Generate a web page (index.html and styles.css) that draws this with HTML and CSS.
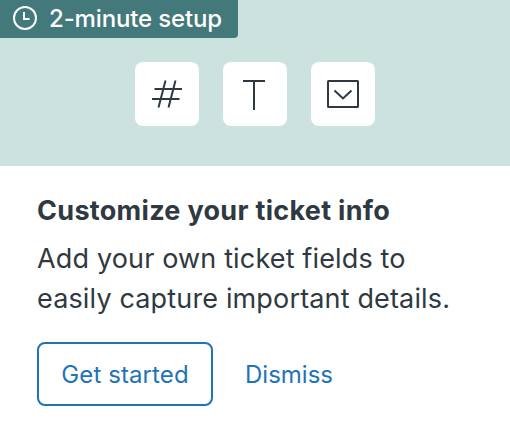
FILE: index.html
```html
<!DOCTYPE html>
<html lang="en">

<head>
    <meta charset="UTF-8">
    <meta name="viewport" content="width=device-width, initial-scale=1.0">
    <title>Customize your ticket info</title>
    <link rel="stylesheet" href="styles.css">
</head>

<body>

    <div class="card">
        <!-- Banner with setup time and field type tiles -->
        <div class="banner">
            <div class="badge">
                <svg class="clock" width="24" height="24" viewBox="0 0 24 24" fill="none" stroke="currentColor" stroke-width="2">
                    <circle cx="12" cy="12" r="11" />
                    <path d="M11 6v7h5.5" />
                </svg>
                <span class="badge-text">2-minute setup</span>
            </div>

            <div class="tiles">
                <div class="tile">
                    <svg width="64" height="64" viewBox="0 0 64 64" fill="none" stroke="currentColor" stroke-width="2">
                        <path d="M30.5 18.5L23.5 45.5M40.5 18.5L33.5 45.5M19.5 27h27.5M17 37h27.5" />
                    </svg>
                </div>
                <div class="tile">
                    <svg width="64" height="64" viewBox="0 0 64 64" fill="none" stroke="currentColor" stroke-width="2">
                        <path d="M20 19h22M31 19v29" />
                    </svg>
                </div>
                <div class="tile">
                    <svg width="64" height="64" viewBox="0 0 64 64" fill="none" stroke="currentColor" stroke-width="2">
                        <rect x="17" y="19" width="30" height="26" rx="0.5" />
                        <path d="M23.5 28.5L32 36.5L40.5 28.5" />
                    </svg>
                </div>
            </div>
        </div>

        <!-- Text and actions -->
        <div class="content">
            <h1 class="title">Customize your ticket info</h1>
            <p class="description">Add your own ticket fields to<br>easily capture important details.</p>
            <div class="actions">
                <button class="btn btn-outline"><span>Get started</span></button>
                <button class="btn btn-link"><span>Dismiss</span></button>
            </div>
        </div>
    </div>

</body>

</html>
```
FILE: styles.css
```css
/* General body styles */
body {
    font-family: Inter, "Liberation Sans", sans-serif;
    margin: 0;
    background-color: #fff;
    color: #2f3941;
}

/* Banner styles */
.banner {
    height: 166px;
    background-color: #cce2df;
}

.badge {
    display: flex;
    align-items: center;
    box-sizing: border-box;
    width: 238px;
    height: 38px;
    padding: 0 0 2px 13px;
    gap: 12px;
    border-radius: 0 0 4px 0;
    background-color: #43797a;
    color: #fff;
    font-size: 24px;
    font-weight: 500;
    letter-spacing: -0.15px;
    line-height: 36px;
    white-space: nowrap;
}

.badge-text {
    padding-top: 2px;
}

.clock {
    flex: none;
}

.tiles {
    display: flex;
    justify-content: center;
    gap: 24px;
    padding-top: 24px;
}

.tile {
    width: 64px;
    height: 64px;
    border-radius: 8px;
    background-color: #fff;
}

.tile svg {
    display: block;
}

/* Text styles */
.content {
    padding: 25px 37px 0;
}

.title {
    margin: 0;
    font-size: 27px;
    font-weight: 700;
    letter-spacing: 0.3px;
    line-height: 40px;
    white-space: nowrap;
}

.description {
    margin: 8px 0 0;
    font-size: 27px;
    letter-spacing: 0.15px;
    line-height: 40px;
    white-space: nowrap;
}

/* Button styles */
.actions {
    display: flex;
    margin-top: 23px;
    gap: 32px;
}

.btn {
    box-sizing: border-box;
    height: 64px;
    padding: 0;
    border: none;
    background: none;
    color: #1f73b7;
    font-family: inherit;
    font-size: 24px;
    white-space: nowrap;
    cursor: pointer;
}

.btn-outline {
    width: 176px;
    border: 2px solid #1f73b7;
    border-radius: 8px;
    letter-spacing: 0.1px;
}
```
